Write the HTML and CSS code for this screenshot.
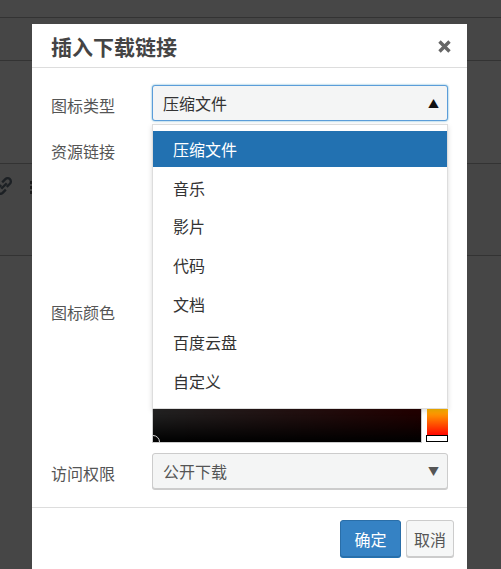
FILE: index.html
```html
<!DOCTYPE html>
<html lang="zh-CN">
<head>
    <meta charset="UTF-8">
    <meta name="viewport" content="width=device-width, initial-scale=1.0">
    <title>插入下载链接</title>
    <link rel="stylesheet" href="styles.css">
</head>
<body>
    <div class="backdrop">
        <div class="bar bar-top"></div>
        <div class="bar bar-toolbar"></div>
        <div class="bar bar-title"></div>
        <div class="bar bar-tools">
            <svg class="link-icon" width="22" height="22" viewBox="0 0 22 22">
                <path d="M8 14 L14 8" stroke="#1c2024" stroke-width="2.6" fill="none"/>
                <path d="M8 10 L4.5 13.5 a3.5 3.5 0 0 0 5 5 L13 15" stroke="#1c2024" stroke-width="2.6" fill="none"/>
                <path d="M14 12 L17.5 8.5 a3.5 3.5 0 0 0 -5 -5 L9 7" stroke="#1c2024" stroke-width="2.6" fill="none"/>
            </svg>
            <span class="grip"></span>
        </div>
    </div>

    <div class="modal">
        <div class="modal-header">
            <h2>插入下载链接</h2>
            <svg class="close" width="15" height="15" viewBox="0 0 15 15">
                <path d="M2.5 2.5 L12.5 12.5 M12.5 2.5 L2.5 12.5" stroke="#666" stroke-width="3.4" fill="none"/>
            </svg>
        </div>

        <div class="modal-body">
            <div class="row">
                <label>图标类型</label>
                <div class="select focused">
                    <span>压缩文件</span>
                    <span class="arrow">&#9650;</span>
                </div>
            </div>
            <div class="row">
                <label>资源链接</label>
                <div class="input"></div>
            </div>
            <div class="row">
                <label>图标颜色</label>
                <div class="color-field">
                    <div class="input"></div>
                    <div class="picker">
                        <div class="picker-square">
                            <span class="picker-handle"></span>
                        </div>
                        <div class="picker-strip">
                            <span class="strip-handle"></span>
                        </div>
                    </div>
                </div>
            </div>
            <div class="row">
                <label>访问权限</label>
                <div class="select">
                    <span>公开下载</span>
                    <span class="arrow">&#9660;</span>
                </div>
            </div>

            <ul class="dropdown">
                <li class="active">压缩文件</li>
                <li>音乐</li>
                <li>影片</li>
                <li>代码</li>
                <li>文档</li>
                <li>百度云盘</li>
                <li>自定义</li>
            </ul>
        </div>

        <div class="modal-footer">
            <button class="btn primary">确定</button>
            <button class="btn">取消</button>
        </div>
    </div>
</body>
</html>
```

FILE: styles.css
```css
body {
    margin: 0;
    height: 569px;
    overflow: hidden;
    background: #464646;
    font-family: "Noto Sans CJK SC", "Noto Sans", sans-serif;
    position: relative;
}
.bar {
    border-bottom: 1px solid #333;
}
.bar-top { height: 17px; background: #474747; }
.bar-toolbar { height: 42px; background: #464646; }
.bar-title { height: 102px; background: #474747; }
.bar-tools {
    height: 91px;
    background: #454545;
    position: relative;
}
.link-icon {
    position: absolute;
    left: -6px;
    top: 12px;
    width: 20px;
    height: 20px;
}
.grip {
    position: absolute;
    left: 30px;
    top: 17px;
    width: 3px;
    height: 13px;
    background: repeating-linear-gradient(to bottom, #1c1c1c 0 3px, transparent 3px 5px);
}

.modal {
    position: absolute;
    left: 32px;
    top: 24px;
    width: 435px;
    bottom: 0;
    background: #fff;
    display: flex;
    flex-direction: column;
}
.modal-header {
    height: 43px;
    border-bottom: 1px solid #ddd;
    display: flex;
    align-items: center;
    justify-content: space-between;
    padding: 0 15px 0 19px;
}
.modal-header h2 {
    margin: 0;
    font-size: 21px;
    font-weight: bold;
    color: #444;
}
.close {
    margin-top: 1px;
}

.modal-body {
    position: relative;
    padding: 17px 19px 18px 19px;
    display: flex;
    flex-direction: column;
    gap: 10px;
    border-bottom: 1px solid #ddd;
}
.row {
    display: grid;
    grid-template-columns: 101px 1fr;
    align-items: center;
}
.row label {
    font-size: 16px;
    color: #555;
    padding-top: 3px;
}
.select {
    height: 34px;
    border: 1px solid #ccc;
    border-radius: 3px;
    background: #f4f5f5;
    box-shadow: 0 1px 0 #ccc;
    display: flex;
    align-items: center;
    justify-content: space-between;
    padding: 0 8px 0 10px;
    font-size: 16px;
    color: #555;
}
.select.focused {
    border-color: #5b9dd9;
    box-shadow: 0 0 2px rgba(30, 140, 190, 0.8);
    color: #333;
}
.arrow {
    font-size: 11px;
}
.select .arrow { color: #555; }
.select.focused .arrow { color: #111; }
.input {
    height: 34px;
    border: 1px solid #ddd;
    border-radius: 3px;
}
.color-field {
    display: flex;
    flex-direction: column;
    gap: 4px;
}
.picker {
    display: flex;
    gap: 5px;
    align-items: flex-start;
}
.picker-square {
    position: relative;
    width: 268px;
    height: 224px;
    border: 1px solid #ccc;
    background:
        linear-gradient(to top, #000, rgba(0, 0, 0, 0)),
        linear-gradient(to right, #fff, #f00);
    overflow: hidden;
}
.picker-handle {
    position: absolute;
    left: -7px;
    bottom: -7px;
    width: 12px;
    height: 12px;
    border: 1px solid #ddd;
    border-radius: 50%;
}
.picker-strip {
    position: relative;
    width: 21px;
    height: 219px;
    background: linear-gradient(to top, #f00, #ff0 17%, #0f0 33%, #0ff 50%, #00f 67%, #f0f 83%, #f00);
}
.strip-handle {
    position: absolute;
    left: -1px;
    bottom: -6px;
    width: 20px;
    height: 5px;
    background: #fff;
    border: 1px solid #000;
}

.dropdown {
    position: absolute;
    left: 120px;
    top: 56px;
    width: 294px;
    margin: 0;
    padding: 6px 0;
    list-style: none;
    background: #fff;
    border: 1px solid #ddd;
    box-shadow: 0 2px 5px rgba(0, 0, 0, 0.15);
}
.dropdown li {
    height: 38.7px;
    line-height: 37px;
    padding-left: 20px;
    font-size: 16px;
    color: #333;
}
.dropdown li.active {
    background: #2271b1;
    color: #fff;
    height: 36px;
    margin-bottom: 2.7px;
    line-height: 36px;
}

.modal-footer {
    display: flex;
    justify-content: flex-end;
    gap: 5px;
    padding: 12px 13px 0 0;
}
.btn {
    height: 37px;
    padding: 0 7px;
    font-family: inherit;
    font-size: 16px;
    color: #555;
    background: #f6f7f7;
    border: 1px solid #ccc;
    border-radius: 3px;
    box-shadow: 0 1px 0 #ccc;
    cursor: pointer;
}
.btn.primary {
    width: 61px;
    background: #3582c4;
    border-color: #2a6ea8;
    color: #fff;
    box-shadow: 0 1px 0 #2271b1;
}
```
